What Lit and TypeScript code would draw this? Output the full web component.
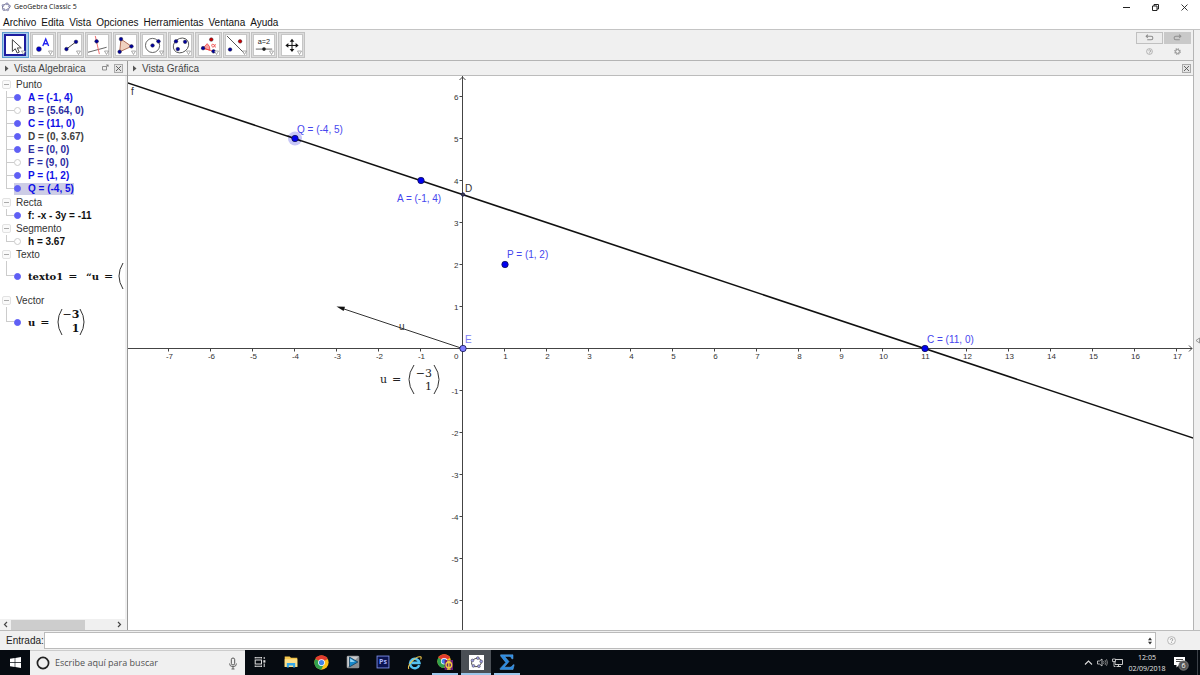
import { LitElement, html, svg, css } from "lit";
import { customElement } from "lit/decorators.js";
import { classMap } from "lit/directives/class-map.js";

const NAVY = "#00009c";
const dot = (x: number, y: number, color = NAVY) =>
  svg`<circle cx=${x} cy=${y} r="2" fill=${color} stroke="#223" stroke-width=".5"/>`;

const tools = [
  { name: "Elige y mueve", icon: svg`<path d="M7 4v13l3.200-3 2.100 4.700 2.300-1-2.100-4.600h4.300z" fill="#fff" stroke="#444" stroke-width="1.100"/>` },
  { name: "Punto", icon: svg`<circle cx="6.500" cy="15.500" r="2.700" fill="#0000c8" stroke="#223" stroke-width=".5"/><path d="M10.800 12 14 4.500l3.200 7.500M11.900 9.600h4.200" fill="none" stroke="#2222f0" stroke-width="1.500"/>` },
  { name: "Segmento", icon: svg`<path d="M6 15.500 16.500 7.500" stroke="#222" stroke-width=".9"/>${dot(6, 15.5)}${dot(16.5, 7.5)}` },
  { name: "Perpendicular", icon: svg`<path d="M0 19 20.500 13.500" stroke="#444" stroke-width=".9"/><path d="M8 1 12.500 21" stroke="#f26060" stroke-width="1"/>${dot(9.5, 7)}` },
  { name: "Polígono", icon: svg`<path d="M5.500 4.500 17 12.500 4 18.500z" fill="#f0d2c0" stroke="#a0553c" stroke-width=".9"/>${dot(5.5, 4.5)}${dot(17, 12.5)}${dot(4, 18.5)}` },
  { name: "Circunferencia", icon: svg`<circle cx="10.500" cy="11.500" r="7.800" fill="none" stroke="#444" stroke-width=".9"/>${dot(10.5, 11.5)}${dot(17, 7)}` },
  { name: "Elipse", icon: svg`<ellipse cx="11" cy="11.500" rx="9" ry="7.600" transform="rotate(-38 11 11.500)" fill="none" stroke="#444" stroke-width=".9"/>${dot(5.5, 7)}${dot(15.5, 7.5)}${dot(7.5, 15.5)}` },
  { name: "Ángulo", icon: svg`<path d="M4.500 14.500 9 9.500Q12.500 12 12 16.800z" fill="#f8a0a0" stroke="#e33" stroke-width=".8"/><path d="M4.500 14.500 16 18" stroke="#e33" stroke-width=".8"/><path d="M18 10c-1 4-4 4-4 1.500s3-1.500 4 2.200" fill="none" stroke="#e44" stroke-width="1"/>${dot(4.5, 14.5)}${dot(16, 18)}${dot(13.5, 5, "#c00")}` },
  { name: "Simetría", icon: svg`<path d="M1 1 20.500 20.500" stroke="#444" stroke-width="1"/>${dot(4.5, 16)}${dot(15.5, 7, "#c00")}` },
  { name: "Deslizador", icon: svg`<text x="11" y="10" text-anchor="middle" font-family="Liberation Sans, sans-serif" font-size="8" fill="#222">a=2</text><path d="M2 15.500H20" stroke="#444" stroke-width=".9"/><circle cx="11" cy="15.500" r="2" fill="#222"/>` },
  { name: "Desplaza vista", icon: svg`<path d="M11 6V17M5.500 11.500H16.500" stroke="#111" stroke-width="1.100"/><path d="M11 4.200 13.600 7.500H8.400zM11 18.800 13.600 15.500H8.400zM3.700 11.500 7 8.900V14.100zM18.300 11.500 15 8.900V14.100z" fill="#111"/>` },
];

type Item = { text: string; color: string; on: boolean; selected?: boolean; math?: "text" | "vector" };
const bright = "#0f0fe6", dark = "#2c2ca0", grey = "#404040", black = "#111";
const groups: { title: string; items: Item[] }[] = [
  { title: "Punto", items: [
    { text: "A = (-1, 4)", color: bright, on: true },
    { text: "B = (5.64, 0)", color: dark, on: false },
    { text: "C = (11, 0)", color: bright, on: true },
    { text: "D = (0, 3.67)", color: grey, on: true },
    { text: "E = (0, 0)", color: dark, on: true },
    { text: "F = (9, 0)", color: dark, on: false },
    { text: "P = (1, 2)", color: bright, on: true },
    { text: "Q = (-4, 5)", color: bright, on: true, selected: true },
  ] },
  { title: "Recta", items: [{ text: "f: -x - 3y = -11", color: black, on: true }] },
  { title: "Segmento", items: [{ text: "h = 3.67", color: black, on: false }] },
  { title: "Texto", items: [{ text: "texto1", color: black, on: true, math: "text" }] },
  { title: "Vector", items: [{ text: "u", color: black, on: true, math: "vector" }] },
];

const logo = (c1: string, c2: string) => svg`
  <ellipse cx="10" cy="10" rx="7.500" ry="6" transform="rotate(-20 10 10)" fill="none" stroke=${c1} stroke-width="1.300"/>
  ${[[4, 7], [12, 3.5], [17, 8.5], [13.5, 15.5], [5.5, 15]].map(([x, y]) => svg`<circle cx=${x} cy=${y} r="2.100" fill=${c2} stroke=${c1} stroke-width=".8"/>`)}`;

const chrome = svg`
  <circle cx="10" cy="10" r="9.500" fill="#fbc116"/>
  <path d="M10 10 1.800 5.200A9.500 9.500 0 0 1 18.200 5.200z" fill="#e33b2e"/>
  <path d="M10 10 1.800 5.200A9.500 9.500 0 0 0 9.500 19.500L13.500 12z" fill="#30a14e"/>
  <circle cx="10" cy="10" r="4.500" fill="#fff"/><circle cx="10" cy="10" r="3.500" fill="#4285e8"/>`;

const apps = [
  { name: "Vista de tareas", size: 12, state: "", icon: svg`<path d="M2 4V1.500M12.500 4V1.500M2 3H12.500M2 18.500V16M12.500 18.500V16M2 17H12.500M2 6.500H12.500V13.500H2zM17 1.500V5M17 12.500V18.500" fill="none" stroke="#ddd" stroke-width="1.700"/><path d="M15.500 7h3.500v4h-3.500z" fill="#ddd"/>` },
  { name: "Explorador", size: 14, state: "", icon: svg`<path d="M1 2H8L10 4H19V17H1z" fill="#f3c64c"/><path d="M1 6H19V17H1z" fill="#fde08a"/><path d="M4 18V11.500H16V18H13V15H7V18z" fill="#35a7e8"/>` },
  { name: "Chrome", size: 15, state: "", icon: chrome },
  { name: "Reproductor", size: 14, state: "", icon: svg`<rect x="1" y="1" width="18" height="18" rx="2" fill="#8b8f92"/><path d="M2 2H18L2 18z" fill="#c9ccce"/><path d="M5 3 17 10 5 17z" fill="#1787c8" stroke="#0c3350"/><path d="M6 5 13 9.500 6 10z" fill="#9ad8f5"/>` },
  { name: "Photoshop", size: 14, state: "", icon: svg`<rect x="1.500" y="1.500" width="17" height="17" fill="#0b1350" stroke="#7d8fe8" stroke-width="1.300"/><text x="10" y="13.500" text-anchor="middle" font-family="Open Sans, sans-serif" font-weight="700" font-size="10" fill="#a9b8ff">Ps</text>` },
  { name: "Internet Explorer", size: 15, state: "", icon: svg`<path d="M16.300 13.500A6.300 6.300 0 1 1 16.600 10.500H6" fill="none" stroke="#54c1f0" stroke-width="3.400"/><path d="M2.500 18.500C-.5 14 12 .500 18.500 2.500 19.500 3.500 18.500 5.500 18 6" fill="none" stroke="#f1c84b" stroke-width="1.400"/>` },
  { name: "Chrome, perfil", size: 16, state: "open", icon: svg`<g transform="scale(.9)">${chrome}</g><rect x="9.500" y="7.500" width="10.500" height="12.500" fill="#6c1d78"/><ellipse cx="14.800" cy="13.700" rx="3.600" ry="3.400" fill="none" stroke="#f0cf3a" stroke-width="1.600"/><path d="M14.800 8.500V19M12.500 8.800H17M12.500 19H17" stroke="#f0cf3a" stroke-width="1.600"/>` },
  { name: "GeoGebra", size: 15, state: "open active", icon: svg`<rect width="20" height="20" fill="#fff"/><g transform="translate(1 1) scale(.9)">${logo("#444", "#9d9de8")}</g>` },
  { name: "Sigma", size: 16, state: "open", icon: svg`<path d="M2 1H17.500V6H16C15.500 3.500 14 3 12 3H7L12.500 9.500 6.500 16.500H13C15.500 16.500 16.500 15.500 17.500 13.500H19L17.500 19.500H1.500V18L8.500 10.500 2 2.500z" fill="#2a8ae0" stroke="#6db4f2" stroke-width=".6"/>` },
];

const range = (a: number, b: number) => Array.from({ length: b - a + 1 }, (_, i) => a + i).filter((n) => n !== 0);

@customElement("app-root")
export class AppRoot extends LitElement {
  static styles = css`
    :host { display: flex; flex-direction: column; height: 100vh; background: #fff; color: #222;
      font: 10px/13px "Liberation Sans", Arial, sans-serif; overflow: hidden; }
    * { box-sizing: border-box; }
    button { border: 0; padding: 0; margin: 0; background: none; font: inherit; color: inherit; display: flex; align-items: center; justify-content: center; }
    svg { display: block; flex: none; }
    .title { display: flex; align-items: center; height: 14px; padding: 0 10px 0 1px; gap: 3px; }
    .title h1 { font: 7px/12px "Open Sans", sans-serif; margin: 0; flex: 1; color: #111; }
    .wbtns { display: flex; gap: 18px; }
    .wbtns button { width: 11px; height: 12px; }
    .menu { display: flex; gap: 5px; height: 15px; padding: 2px 3px 0; color: #111; }
    .menu a { color: inherit; text-decoration: none; }
    .work { flex: 1; display: flex; min-height: 0; border-top: 1px solid #c4c4c4; background: #f0f0f0; }
    .main { flex: 1; min-width: 0; display: flex; flex-direction: column; }
    .side { width: 7px; border-left: 1px solid #b4b4b4; display: flex; align-items: center; justify-content: flex-end; padding-top: 20px; }
    .toolbar { height: 31px; display: flex; justify-content: space-between; align-items: flex-start; padding: 2px 2px 0; border-bottom: 1px solid #b4b4b4; }
    .tools { display: grid; grid-template-columns: repeat(11, 1fr); gap: 1px; width: 303px; }
    .tool { height: 26px; background: #dcdcdc; border: 1px solid #c2c2c2; position: relative; }
    .tool .pic { width: 22px; height: 22px; background: #fff; border: 1px solid #c6c6c6; display: grid; place-items: center; }
    .tool.on { background: #a8cdee; border-color: #5d9ccd; }
    .tool.on .pic { border: 2px solid #1d1da0; }
    .tool .more { position: absolute; right: 2px; bottom: 2px; }
    .actions { display: grid; grid-template-columns: 27px 27px; gap: 1px; }
    .actions button { height: 12px; }
    .actions .undo { border: 1px solid #c0c0c0; background: #ececec; }
    .actions .redo { background: #c9c9c9; }
    .panels { flex: 1; display: flex; min-height: 0; }
    .panel { display: flex; flex-direction: column; min-width: 0; }
    .algebra { width: 128px; border-right: 1px solid #999; }
    .graphics { flex: 1; }
    .head { height: 15px; border-bottom: 1px solid #bcbcbc; display: flex; align-items: center; padding: 0 2px 0 4px; gap: 5px; color: #444; }
    .algebra .head { padding-right: 4px; }
    .head h2 { font: inherit; margin: 0; flex: 1; white-space: nowrap; }
    .tree { flex: 1; min-height: 0; background: #fff; margin-right: 2px; padding: 2px 0 0 2px; overflow: hidden; }
    ul { list-style: none; margin: 0; padding: 0; }
    .group:nth-child(2) { margin-top: 1px; }
    .group:nth-child(5) { margin-top: 3px; }
    .gtitle { display: flex; align-items: center; gap: 5px; height: 13px; color: #333; }
    .gtitle button { width: 9px; height: 9px; border: 1px solid #e2e2e2; border-radius: 2px; background: #fafafa; }
    .item { display: flex; align-items: center; height: 13px; font-weight: 700; white-space: nowrap; }
    .item.math { height: 30px; font-family: "DejaVu Serif", serif; }
    .branch { width: 8px; margin-left: 4px; align-self: stretch; border-left: 1px solid #ccc; display: flex; align-items: center; }
    .branch::after { content: ""; flex: 1; height: 1px; background: #ccc; }
    .item:last-child .branch { height: 50%; align-self: flex-start; align-items: flex-end; }
    .row { display: flex; align-items: center; gap: 7px; height: 100%; }
    .selected .row { background: #cdcde6; height: 12px; }
    .vis { width: 7px; height: 7px; border-radius: 50%; border: 1px solid #ccc; background: #fff; }
    .vis.on { background: #5f5ff5; border-color: #5f5ff5; }
    .formula { display: flex; align-items: center; gap: 5px; font-weight: 700; }
    .thin { font-size: 11px; font-weight: 400; }
    .bracket { display: flex; align-items: center; margin-left: 2px; }
    .column { display: grid; text-align: right; font-size: 11px; line-height: 14px; }
    .scroll { height: 11px; display: flex; align-items: center; margin-right: 2px; }
    .scroll button { width: 11px; height: 11px; }
    .track { flex: 1; height: 10px; }
    .thumb { width: 72%; height: 10px; background: #cdcdcd; }
    .canvas { flex: 1; min-height: 0; background: #fff; overflow: hidden; }
    .lbl { font: 10px "Liberation Sans", Arial, sans-serif; fill: #4646ee; }
    .lbl.plain { fill: #333; }
    .lbl.soft { fill: #7d7df5; }
    .tick { font: 8px "Liberation Sans", Arial, sans-serif; fill: #333; }
    .tex { font: 11px "DejaVu Serif", serif; fill: #222; }
    .entry { display: flex; align-items: center; height: 20px; border-top: 1px solid #bcbcbc; background: #f0f0f0; padding: 0 24px 0 6px; }
    .entry label { width: 38px; color: #222; }
    .field { flex: 1; display: flex; align-items: center; height: 17px; background: #fff; border: 1px solid #bbb; padding-right: 2px; }
    .field input { flex: 1; border: 0; outline: 0; min-width: 0; background: none; font: inherit; }
    .help { margin-left: 10px; width: 10px; }
    .taskbar { height: 25px; display: flex; background: #060b11; color: #e6e6e6; font: 7px/11px "Open Sans", sans-serif; }
    .start { width: 30px; }
    .search { width: 215px; display: flex; align-items: center; gap: 5px; background: #f0f0f0; border-top: 1px solid #ccc; padding: 0 7px 0 6px; color: #333; }
    .search input { flex: 1; min-width: 0; border: 0; outline: 0; padding: 0; background: none; font: 9px/12px "Open Sans", sans-serif; }
    .search input::placeholder { color: #505050; opacity: 1; }
    .apps { width: 275px; display: grid; grid-template-columns: repeat(9, 1fr); column-gap: 5px; margin-right: auto; padding-left: 2px; }
    .apps button { border-bottom: 2px solid transparent; border-top: 1px solid transparent; }
    .apps .open { border-bottom-color: #9cc6ea; }
    .apps .active { background: #4a4f55; margin: 0 -2px; border-top-color: #4a4f55; }
    .tray { display: flex; align-items: center; gap: 4px; padding-right: 2px; }
    .clock { text-align: center; width: 40px; }
    .notif { width: 16px; margin-left: 2px; }
    .peek { width: 1px; height: 25px; background: #3c4148; margin-left: 4px; }
  `;

  private graph() {
    const U = 42, ox = 334.5, oy = 272.5;
    const X = (x: number) => ox + U * x, Y = (y: number) => oy - U * y;
    const point = (x: number, y: number, fill = "#0000f0", r = 3.2) =>
      svg`<circle cx=${X(x) + 0.5} cy=${Y(y)} r=${r} fill=${fill} stroke="#111155" stroke-width=".8"/>`;
    return html`<svg width="100%" height="100%" role="img" aria-label="Vista Gráfica">
      <g stroke="#444" stroke-width="1" fill="none">
        <path d="M0 ${oy}H1064M${ox} 0V2000M1061 ${oy - 3}l3 3-3 3M${ox - 3} 4l3-3 3 3"/>
        ${range(-7, 17).map((n) => svg`<path d="M${X(n)} ${oy}v3"/>`)}
        ${range(-6, 6).map((n) => svg`<path d="M${ox} ${Y(n)}h-3"/>`)}
      </g>
      ${range(-7, 17).map((n) => svg`<text class="tick" x=${X(n) + 1} y=${oy + 10} text-anchor="middle">${n}</text>`)}
      ${range(-6, 6).map((n) => svg`<text class="tick" x=${ox - 4} y=${Y(n) + 3} text-anchor="end">${n}</text>`)}
      <text class="tick" x=${ox - 4} y=${oy + 10} text-anchor="end">0</text>
      <path d="M${X(-10)} ${Y(7)}L${X(20)} ${Y(-3)}" stroke="#111" stroke-width="1.600"/>
      <path d="M${ox} ${oy}L${X(-3) + 6} ${Y(1) + 2}" stroke="#333" stroke-width="1"/>
      <path d="M${X(-3)} ${Y(1)}l8.500.300-1.400 4.200z" fill="#111"/>
      <circle cx=${X(-4) + 0.5} cy=${Y(5)} r="7" fill="#b9b9f5" fill-opacity=".8"/>
      <path d="M${X(-4) - 7} ${Y(5) - 2.5}l14 5" stroke="#111" stroke-width="1.600"/>
      ${point(-4, 5)}${point(-1, 4)}${point(1, 2)}${point(11, 0)}${point(0, 0, "#7d7dff")}
      ${point(0, 11 / 3, "#444", 1.7)}
      <text class="lbl" x="169" y="57">Q = (-4, 5)</text>
      <text class="lbl" x="269" y="126">A = (-1, 4)</text>
      <text class="lbl" x="379" y="182">P = (1, 2)</text>
      <text class="lbl" x="799" y="267">C = (11, 0)</text>
      <text class="lbl soft" x="337" y="267">E</text>
      <text class="lbl plain" x="337" y="116">D</text>
      <text class="lbl plain" x="3" y="19">f</text>
      <text class="lbl plain" x="271" y="254">u</text>
      <text class="tex" x="252" y="307">u</text>
      <text class="tex" x="264" y="307">=</text>
      <text class="tex" x="304" y="301" text-anchor="end">−3</text>
      <text class="tex" x="304" y="314" text-anchor="end">1</text>
      <path d="M286 289q-10 14.500 0 29M306 289q10 14.500 0 29" fill="none" stroke="#333" stroke-width="1"/>
    </svg>`;
  }

  private paren(right = false) {
    return html`<svg width="6" height="28" viewBox="0 0 6 28"><path d=${right ? "M1 1q8 13 0 26" : "M5 1q-8 13 0 26"} fill="none" stroke="#333" stroke-width="1"/></svg>`;
  }

  private content(i: Item) {
    if (i.math === "text")
      return html`<span class="formula">texto1 <span class="thin">=</span> <span>&nbsp;“u</span> <span class="thin">=</span> ${this.paren()}</span>`;
    if (i.math === "vector")
      return html`<span class="formula">u <span class="thin">=</span><span class="bracket">${this.paren()}<span class="column"><span><span class="thin">−</span>3</span><span>1</span></span>${this.paren(true)}</span></span>`;
    return html`<span>${i.text}</span>`;
  }

  private arrow() {
    return html`<svg width="5" height="7" viewBox="0 0 5 7"><path d="M1 .5 4.500 3.500 1 6.500z" fill="#555"/></svg>`;
  }

  private close() {
    return html`<button aria-label="Cerrar vista"><svg width="9" height="9" viewBox="0 0 9 9"><rect x=".5" y=".5" width="8" height="8" fill="#e4e4e4" stroke="#aaa"/><path d="M2 2 7 7M7 2 2 7" stroke="#555" stroke-width=".9"/></svg></button>`;
  }

  render() {
    return html`
      <header class="title">
        <svg width="10" height="10" viewBox="0 0 20 20">${logo("#555577", "#b9b9e0")}</svg>
        <h1>GeoGebra Classic 5</h1>
        <div class="wbtns">
          <button aria-label="Minimizar"><svg width="9" height="9" viewBox="0 0 9 9"><path d="M1 4.500H8" stroke="#222"/></svg></button>
          <button aria-label="Restaurar"><svg width="9" height="9" viewBox="0 0 9 9"><path d="M1.500 3H6V7.500H1.500zM3 3V1.500H7.500V6H6" fill="none" stroke="#222"/></svg></button>
          <button aria-label="Cerrar"><svg width="9" height="9" viewBox="0 0 9 9"><path d="M1.500 1.500 7.500 7.500M7.500 1.500 1.500 7.500" stroke="#222" stroke-width=".9"/></svg></button>
        </div>
      </header>
      <nav class="menu">
        ${["Archivo", "Edita", "Vista", "Opciones", "Herramientas", "Ventana", "Ayuda"].map((m) => html`<a href="#">${m}</a>`)}
      </nav>
      <div class="work">
        <div class="main">
          <div class="toolbar">
            <div class="tools">
              ${tools.map((t, i) => html`<button class=${classMap({ tool: true, on: i === 0 })} aria-label=${t.name}>
                <span class="pic"><svg width="20" height="20" viewBox="0 0 22 22">${t.icon}</svg></span>
                <svg class="more" width="5" height="5" viewBox="0 0 5 5"><path d="M.5 1H4.500L2.500 4.500z" fill="#fff" stroke="#777" stroke-width=".6"/></svg>
              </button>`)}
            </div>
            <div class="actions">
              <button class="undo" aria-label="Deshacer"><svg width="9" height="8" viewBox="0 0 8 7"><path d="M1 2H5.500Q7 2 7 3.500T5.500 5H2M2.500.500 1 2 2.500 3.500" fill="none" stroke="#8a8a8a" stroke-width=".9"/></svg></button>
              <button class="redo" aria-label="Rehacer"><svg width="9" height="8" viewBox="0 0 8 7"><path d="M7 2H2.500Q1 2 1 3.500T2.500 5H6M5.500.500 7 2 5.500 3.500" fill="none" stroke="#8f8f8f" stroke-width=".9"/></svg></button>
              <button aria-label="Ayuda"><svg width="7" height="7" viewBox="0 0 7 7"><circle cx="3.500" cy="3.500" r="2.900" fill="none" stroke="#999" stroke-width=".7"/><path d="M2.500 2.700Q3.500 1.200 4.500 2.500T3.500 4M3.500 4.600v.8" fill="none" stroke="#888" stroke-width=".7"/></svg></button>
              <button aria-label="Preferencias"><svg width="7" height="7" viewBox="0 0 7 7"><circle cx="3.500" cy="3.500" r="2.700" fill="none" stroke="#888" stroke-width="1.200" stroke-dasharray="1.200 .9"/><circle cx="3.500" cy="3.500" r="1.900" fill="#f0f0f0" stroke="#888" stroke-width=".9"/></svg></button>
            </div>
          </div>
          <div class="panels">
            <section class="panel algebra">
              <div class="head">${this.arrow()}<h2>Vista Algebraica</h2>
                <button aria-label="Ventana nueva"><svg width="7" height="9" viewBox="0 0 7 9"><path d="M.5 2.500H4.500V6H.5zM4 1H6.500M4.500 2.500 6 1V3" fill="none" stroke="#777" stroke-width=".8"/></svg></button>
                ${this.close()}
              </div>
              <div class="tree">
                ${groups.map((g) => html`<div class="group">
                  <div class="gtitle"><button aria-label="Contraer ${g.title}"><svg width="5" height="1" viewBox="0 0 5 1"><path d="M0 .5H5" stroke="#aaa"/></svg></button>${g.title}</div>
                  <ul>${g.items.map((i) => html`<li class=${classMap({ item: true, math: !!i.math, selected: !!i.selected })}>
                    <span class="branch"></span>
                    <span class="row" style="color:${i.color}"><button class=${classMap({ vis: true, on: i.on })} aria-label="Mostrar ${i.text}"></button>${this.content(i)}</span>
                  </li>`)}</ul>
                </div>`)}
              </div>
              <div class="scroll">
                <button aria-label="Izquierda"><svg width="5" height="7" viewBox="0 0 5 7"><path d="M4 1 1.500 3.500 4 6" fill="none" stroke="#444" stroke-width="1.200"/></svg></button>
                <div class="track"><div class="thumb"></div></div>
                <button aria-label="Derecha"><svg width="5" height="7" viewBox="0 0 5 7"><path d="M1 1 3.500 3.500 1 6" fill="none" stroke="#444" stroke-width="1.200"/></svg></button>
              </div>
            </section>
            <section class="panel graphics">
              <div class="head">${this.arrow()}<h2>Vista Gráfica</h2>${this.close()}</div>
              <div class="canvas">${this.graph()}</div>
            </section>
          </div>
        </div>
        <div class="side"><svg width="5" height="7" viewBox="0 0 5 7"><path d="M4.500 1V6L1 3.500z" fill="none" stroke="#777" stroke-width=".7"/></svg></div>
      </div>
      <div class="entry">
        <label for="entrada">Entrada:</label>
        <div class="field"><input id="entrada" />
          <button aria-label="Historial"><svg width="6" height="8" viewBox="0 0 6 8"><path d="M3 .5 5 3.200H1zM3 7.500 5 4.800H1z" fill="#333"/></svg></button></div>
        <button class="help" aria-label="Ayuda de entrada"><svg width="9" height="9" viewBox="0 0 9 9"><circle cx="4.500" cy="4.500" r="3.900" fill="#f6f6f6" stroke="#aaa" stroke-width=".8"/><path d="M3.300 3.700Q3.500 2.500 4.600 2.500T5.700 3.700 4.500 5.200M4.500 6v.8" fill="none" stroke="#888" stroke-width=".8"/></svg></button>
      </div>
      <footer class="taskbar">
        <button class="start" aria-label="Inicio"><svg width="11" height="11" viewBox="0 0 11 11"><path d="M0 1.700 4.700 1V5.100H0zM5.300.900 11 0V5.100H5.300zM0 5.800H4.700V10L0 9.300zM5.300 5.800H11V11L5.300 10.100z" fill="#fff"/></svg></button>
        <div class="search">
          <svg width="14" height="14" viewBox="0 0 14 14"><circle cx="7" cy="7" r="5.600" fill="none" stroke="#222" stroke-width="1.700"/></svg>
          <input aria-label="Buscar" placeholder="Escribe aquí para buscar" />
          <svg width="10" height="13" viewBox="0 0 10 13"><rect x="3.300" y="1" width="3.400" height="7" rx="1.700" fill="none" stroke="#555"/><path d="M1.500 6.500Q1.500 9.700 5 9.700T8.500 6.500M5 9.700V12M3.500 12h3" fill="none" stroke="#555" stroke-width=".9"/></svg>
        </div>
        <div class="apps">
          ${apps.map((a) => html`<button class=${a.state} aria-label=${a.name}><svg width=${a.size} height=${a.size} viewBox="0 0 20 20">${a.icon}</svg></button>`)}
        </div>
        <div class="tray">
          <svg width="9" height="9" viewBox="0 0 9 9"><path d="M1 6.500 4.500 3 8 6.500" fill="none" stroke="#ddd" stroke-width="1.100"/></svg>
          <svg width="11" height="9" viewBox="0 0 11 9"><path d="M.5 3H2.500L5 1V8L2.500 6H.5z" fill="none" stroke="#ddd" stroke-width=".8"/><path d="M6.500 3q1 1.500 0 3M8 2q2 2.500 0 5M9.500 1.200q2 3.300 0 6.600" fill="none" stroke="#aaa" stroke-width=".7"/></svg>
          <svg width="11" height="9" viewBox="0 0 11 9"><path d="M3 1.500H10.500V6.500H3zM6.500 6.500V8.500M4.500 8.500H9" fill="none" stroke="#ddd" stroke-width=".9"/><path d="M.5 1h3v2.500h-3zM2 3.500V8.500H3.500" fill="#060b11" stroke="#ddd" stroke-width=".8"/></svg>
          <div class="clock"><div>12:05</div><div>02/09/2018</div></div>
          <button class="notif" aria-label="Notificaciones"><svg width="16" height="16" viewBox="0 0 16 16"><path d="M1 2H12V10H6L3.500 12.500V10H1z" fill="#fff"/><path d="M3 4.500H10M3 6.500H10" stroke="#222" stroke-width=".8"/><circle cx="10.500" cy="10.500" r="4.800" fill="#555" stroke="#999" stroke-width=".6"/><text x="10.500" y="13" text-anchor="middle" font-family="Open Sans, sans-serif" font-size="7" fill="#fff">6</text></svg></button>
          <span class="peek"></span>
        </div>
      </footer>`;
  }
}
